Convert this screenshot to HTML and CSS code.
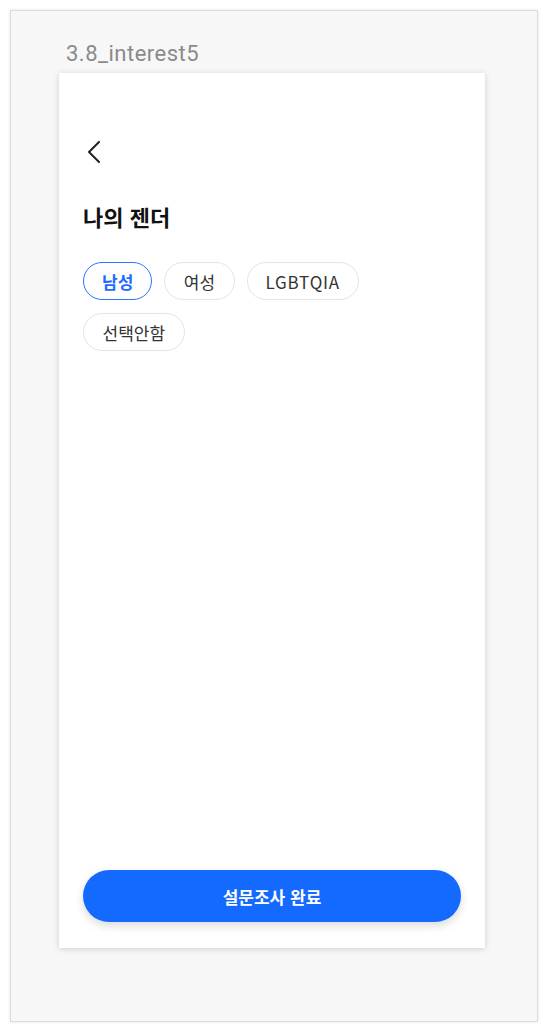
FILE: index.html
```html
<!DOCTYPE html>
<html lang="ko">
<head>
<meta charset="utf-8">
<link rel="stylesheet" href="styles.css">
</head>
<body>
<div class="frame">
  <div class="frame-label">3.8_interest5</div>
  <div class="card">
    <div class="back">
      <svg width="14" height="22" viewBox="0 0 14 22"><polyline points="12,1 2,11 12,21" fill="none" stroke="#222" stroke-width="2" stroke-linecap="round" stroke-linejoin="round"/></svg>
    </div>
    <h1 class="title">나의 젠더</h1>
    <div class="chips">
      <span class="chip chip-on">남성</span>
      <span class="chip">여성</span>
      <span class="chip chip-latin">LGBTQIA</span>
      <span class="chip">선택안함</span>
    </div>
    <button class="submit">설문조사 완료</button>
  </div>
</div>
</body>
</html>
```
FILE: styles.css
```css
html, body { margin: 0; padding: 0; background: #fff; }
body { padding: 10px; width: 528px; box-sizing: content-box; }
.frame {
  width: 528px;
  height: 1012px;
  box-sizing: border-box;
  background: #f7f7f7;
  border: 1px solid #dcdcdc;
  box-shadow: 0 0 3px rgba(0,0,0,0.12);
  padding: 30px 0 0 48px;
  display: flex;
  flex-direction: column;
}
.frame-label {
  font-family: Roboto, "Liberation Sans", sans-serif;
  font-size: 22px;
  line-height: 26px;
  letter-spacing: 0.5px;
  color: #8a8a8a;
  padding-left: 7px;
  margin-bottom: 6px;
}
.card {
  width: 426px;
  height: 875px;
  box-sizing: border-box;
  background: #fff;
  box-shadow: 0 1px 6px rgba(0,0,0,0.16);
  padding: 0 24px 26px 24px;
  display: flex;
  flex-direction: column;
  font-family: "Noto Sans CJK KR", "Noto Sans", sans-serif;
}
.back { margin-top: 68px; height: 22px; padding-left: 4px; }
.back svg { display: block; }
.title {
  margin: 38px 0 0 0;
  font-size: 22px;
  line-height: 30px;
  font-weight: 700;
  color: #111;
  letter-spacing: 0;
}
.chips {
  margin-top: 31px;
  display: flex;
  flex-wrap: wrap;
  gap: 13px 12px;
  width: 300px;
}
.chip {
  height: 38px;
  box-sizing: border-box;
  border: 1px solid #e4e4e4;
  border-radius: 19px;
  padding: 0 18.5px;
  display: flex;
  align-items: center;
  font-size: 17px;
  color: #333;
  background: #fff;
}
.chip-latin { letter-spacing: 0.8px; padding: 0 18px; }
.chip-on {
  border: 1.5px solid #2b75ff;
  color: #1a6bff;
  font-weight: 700;
  padding: 0 18px;
}
.submit {
  margin-top: auto;
  height: 52px;
  border: none;
  border-radius: 26px;
  background: #1469ff;
  color: #fff;
  font-family: "Noto Sans CJK KR", "Noto Sans", sans-serif;
  font-size: 17px;
  font-weight: 700;
  box-shadow: 0 4px 10px rgba(0,0,0,0.14);
}
```
